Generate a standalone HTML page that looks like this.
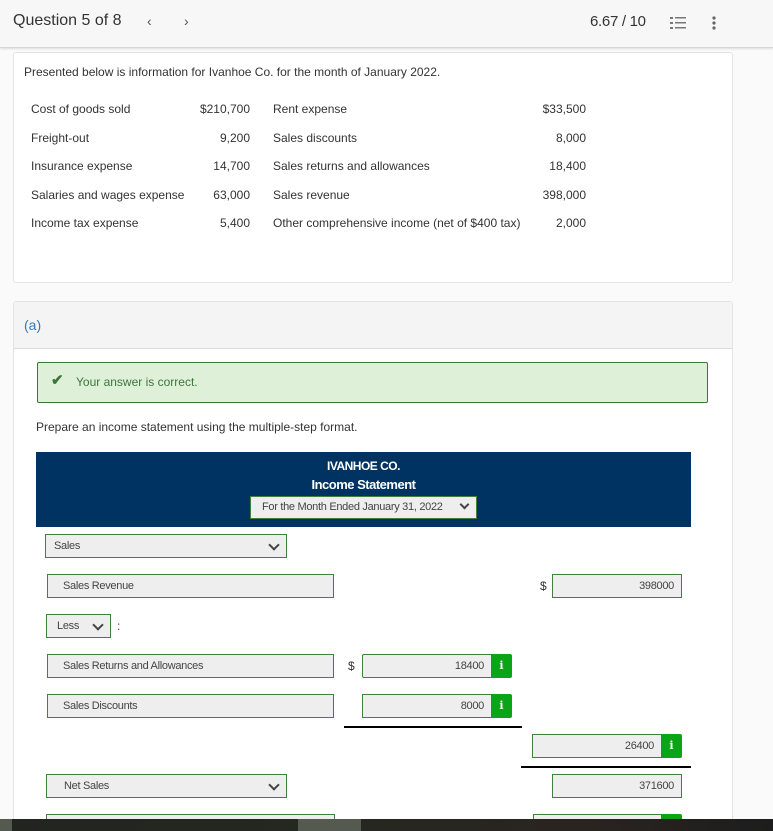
<!DOCTYPE html>
<html style="width:773px;height:831px;overflow:hidden"><head><style>
*{margin:0;padding:0;box-sizing:border-box}
body{width:773px;height:831px;overflow:hidden;background:#fafafa;font-family:"Liberation Sans",sans-serif;color:#333;position:relative;font-size:12px}
.a{position:absolute}
.top{left:0;top:0;width:773px;height:48px;background:#f7f7f7;border-bottom:1px solid #d6d6d6;box-shadow:0 1px 2px #ddd}
.card{background:#fff;border:1px solid #e3e3e3;border-radius:3px}
.inp{position:absolute;background:#eee;border:1px solid #3f7f3f;height:24px;font-size:11px;letter-spacing:-0.3px;line-height:22px;color:#444;padding:0 8px}
.r{text-align:right;padding-right:7px}
.ib{position:absolute;background:#0aa516;color:#fff;font-weight:bold;font-size:11px;text-align:center;line-height:24px;width:21px;height:24px;border-radius:0 2px 2px 0;font-family:"DejaVu Serif",serif}
.chev{position:absolute;right:8px;top:6px;width:8px;height:8px;border-right:2px solid #444;border-bottom:2px solid #444;transform:rotate(45deg)}
</style></head><body>
<div class="a top"></div>
<div class="a" style="left:13px;top:12px;font-size:16px;color:#333">Question 5 of 8</div>
<div class="a" style="left:147px;top:13px;font-size:14px;color:#555">&lsaquo;</div>
<div class="a" style="left:184px;top:13px;font-size:14px;color:#555">&rsaquo;</div>
<div class="a" style="left:590px;top:13px;font-size:15px;color:#333;letter-spacing:-0.3px">6.67 / 10</div>
<svg class="a" style="left:670px;top:16px" width="16" height="14"><g fill="#777"><rect x="0" y="1" width="3" height="2"/><rect x="0" y="6" width="3" height="2"/><rect x="0" y="11" width="3" height="2"/><rect x="5" y="1" width="11" height="1.5"/><rect x="5" y="6" width="11" height="1.5"/><rect x="5" y="11" width="11" height="1.5"/></g></svg>
<svg class="a" style="left:712px;top:16px" width="4" height="14"><g fill="#666"><circle cx="2" cy="2" r="1.6"/><circle cx="2" cy="7" r="1.6"/><circle cx="2" cy="12" r="1.6"/></g></svg>

<div class="a card" style="left:13px;top:52px;width:720px;height:231px"></div>
<div class="a" style="left:24px;top:65px">Presented below is information for Ivanhoe Co. for the month of January 2022.</div>
<div class="a" style="left:31px;top:95px;line-height:28.6px">Cost of goods sold<br>Freight-out<br>Insurance expense<br>Salaries and wages expense<br>Income tax expense</div>
<div class="a" style="left:170px;width:80px;text-align:right;top:95px;line-height:28.6px">$210,700<br>9,200<br>14,700<br>63,000<br>5,400</div>
<div class="a" style="left:273px;top:95px;line-height:28.6px">Rent expense<br>Sales discounts<br>Sales returns and allowances<br>Sales revenue<br>Other comprehensive income (net of $400 tax)</div>
<div class="a" style="left:506px;width:80px;text-align:right;top:95px;line-height:28.6px">$33,500<br>8,000<br>18,400<br>398,000<br>2,000</div>

<div class="a card" style="left:13px;top:301px;width:720px;height:540px"></div>
<div class="a" style="left:14px;top:302px;width:718px;height:47px;background:#f4f4f4;border-bottom:1px solid #ddd"></div>
<div class="a" style="left:24px;top:317px;font-size:14px;color:#337ab7">(a)</div>
<div class="a" style="left:37px;top:362px;width:671px;height:41px;background:#dff0d8;border:1px solid #3c763d;border-radius:2px"></div>
<div class="a" style="left:51px;top:371px;font-size:15px;color:#3c763d;font-weight:bold">&#10004;</div>
<div class="a" style="left:76px;top:375px;color:#3c763d">Your answer is correct.</div>
<div class="a" style="left:36px;top:420px">Prepare an income statement using the multiple-step format.</div>

<div class="a" style="left:36px;top:452px;width:655px;height:75px;background:#003361"></div>
<div class="a" style="left:36px;width:655px;text-align:center;top:459px;color:#fff;font-weight:bold;font-size:12px;letter-spacing:-0.5px">IVANHOE CO.</div>
<div class="a" style="left:36px;width:655px;text-align:center;top:477px;color:#fff;font-weight:bold;font-size:13px;letter-spacing:-0.5px">Income Statement</div>
<div class="inp" style="left:250px;top:496px;width:227px;height:23px;line-height:21px;padding-left:11px">For the Month Ended January 31, 2022<div class="chev" style="top:4px;width:7px;height:7px"></div></div>

<div class="inp" style="left:45px;top:534px;width:242px">Sales<div class="chev"></div></div>
<div class="inp" style="left:47px;top:574px;width:287px;padding-left:15px">Sales Revenue</div>
<div class="a" style="left:540px;top:579px;font-size:12px">$</div>
<div class="inp r" style="left:552px;top:574px;width:130px">398000</div>
<div class="inp" style="left:46px;top:614px;width:65px;padding-left:10px">Less<div class="chev"></div></div>
<div class="a" style="left:117px;top:619px;color:#8b2020">:</div>
<div class="inp" style="left:47px;top:654px;width:287px;padding-left:15px">Sales Returns and Allowances</div>
<div class="a" style="left:348px;top:659px;font-size:12px">$</div>
<div class="inp r" style="left:362px;top:654px;width:130px;border-radius:2px 0 0 2px">18400</div>
<div class="ib" style="left:491px;top:654px">i</div>
<div class="inp" style="left:47px;top:694px;width:287px;padding-left:15px">Sales Discounts</div>
<div class="inp r" style="left:362px;top:694px;width:130px">8000</div>
<div class="ib" style="left:491px;top:694px">i</div>
<div class="a" style="left:344px;top:726px;width:178px;height:1.5px;background:#000"></div>
<div class="inp r" style="left:532px;top:734px;width:130px">26400</div>
<div class="ib" style="left:661px;top:734px">i</div>
<div class="a" style="left:521px;top:766px;width:170px;height:1.5px;background:#000"></div>
<div class="inp" style="left:46px;top:774px;width:241px;padding-left:17px">Net Sales<div class="chev"></div></div>
<div class="inp r" style="left:552px;top:774px;width:130px">371600</div>
<div class="inp" style="left:46px;top:814px;width:289px"></div>
<div class="inp" style="left:533px;top:814px;width:130px"></div>
<div class="ib" style="left:661px;top:814px"></div>

<div class="a" style="left:0;top:819px;width:773px;height:12px;background:linear-gradient(90deg,#222420,#252820 40%,#2a2420 75%,#1d1d1d)"></div>
<div class="a" style="left:0;top:819px;width:12px;height:12px;background:#555a50"></div>
<div class="a" style="left:298px;top:819px;width:63px;height:12px;background:#555a50"></div>
</body></html>
